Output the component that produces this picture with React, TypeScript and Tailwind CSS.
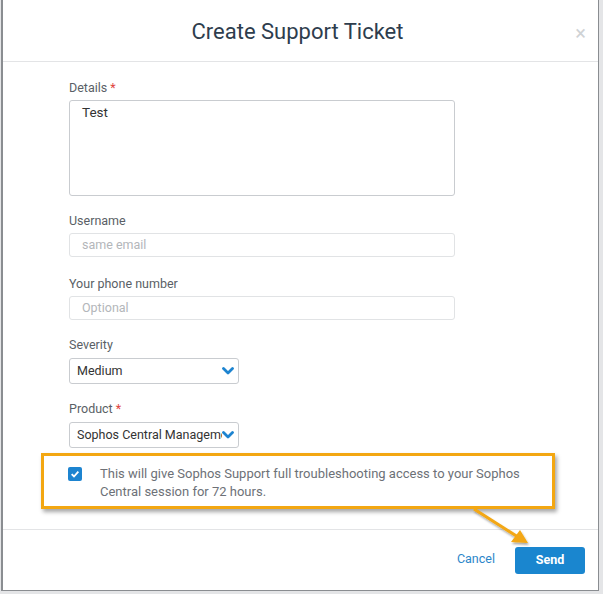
function Label({ text, required }: { text: string; required?: boolean }) {
  return (
    <div className="text-[12.5px] text-[#5a5f66] leading-[16px] mb-[4px]">
      {text}
      {required && <span className="text-[#e0443e] ml-[3px]">*</span>}
    </div>
  );
}

function Select({ value }: { value: string }) {
  return (
    <div className="mt-[5px] w-[170px] h-[26px] border border-[#c9ccd0] rounded-[3px] flex items-center pl-[7px] pr-[4px] bg-white">
      <span className="flex-1 text-[12.5px] text-[#333] whitespace-nowrap overflow-hidden">{value}</span>
      <svg viewBox="0 0 12 8" className="w-[12px] h-[8px] shrink-0">
        <path d="M1.5 1.5 L6 6 L10.5 1.5" stroke="#1d84d0" strokeWidth="2.8" fill="none" strokeLinecap="round" strokeLinejoin="round" />
      </svg>
    </div>
  );
}

export default function App() {
  return (
    <div
      className="relative w-[603px] h-[594px] bg-[#e4e5e7] overflow-hidden"
      style={{ fontFamily: "Roboto, 'Noto Sans', sans-serif" }}
    >
      <div className="w-[598px] h-[591px] ml-[1px] bg-white border-l-[2px] border-r border-b border-[#8a8d91] flex flex-col">
        {/* header */}
        <div className="relative h-[62px] border-b border-[#e3e4e6] flex items-center justify-center shrink-0">
          <h1 className="text-[22px] text-[#2e3d4d] mr-[6px] pt-[2px]">Create Support Ticket</h1>
          <span className="absolute right-[12px] top-[23px] text-[20px] leading-none text-[#cfd2d5]">×</span>
        </div>

        {/* body */}
        <div className="flex-1 pl-[66px] pt-[18px] relative">
          <Label text="Details" required />
          <div className="w-[386px] h-[96px] border border-[#c9ccd0] rounded-[3px] px-[12px] pt-[1px] text-[13.5px] text-[#333]">
            Test
          </div>

          <div className="mt-[17px]">
            <Label text="Username" />
            <div className="w-[386px] h-[24px] border border-[#e1e3e5] rounded-[3px] px-[12px] flex items-center text-[12.5px] text-[#b3b6ba]">
              same email
            </div>
          </div>

          <div className="mt-[19px]">
            <Label text="Your phone number" />
            <div className="w-[386px] h-[24px] border border-[#e1e3e5] rounded-[3px] px-[12px] flex items-center text-[12.5px] text-[#b3b6ba]">
              Optional
            </div>
          </div>

          <div className="mt-[17px]">
            <Label text="Severity" />
            <Select value="Medium" />
          </div>

          <div className="mt-[17px]">
            <Label text="Product" required />
            <Select value="Sophos Central Management" />
          </div>

          {/* highlighted consent box */}
          <div className="ml-[-28px] mt-[5px] w-[514px] h-[56px] border-[3px] border-[#f3a712] shadow-[2px_3px_4px_rgba(0,0,0,0.35)] flex items-start pt-[9px] pl-[24px]">
            <div className="w-[14px] h-[14px] mt-[2px] rounded-[2px] bg-[#1d84d0] flex items-center justify-center shrink-0">
              <svg viewBox="0 0 12 12" className="w-[10px] h-[10px]">
                <path d="M2 6.2 L4.8 9 L10 3.2" stroke="white" strokeWidth="2.2" fill="none" />
              </svg>
            </div>
            <p className="ml-[18px] text-[13px] leading-[18px] text-[#6d7177] w-[430px]">
              This will give Sophos Support full troubleshooting access to your Sophos Central session for 72 hours.
            </p>
          </div>
        </div>

        {/* footer */}
        <div className="h-[60px] border-t border-[#e3e4e6] flex items-center justify-end pr-[13px] shrink-0 mb-[1px]">
          <span className="text-[12.5px] text-[#2b86c9] mr-[20px]">Cancel</span>
          <button className="w-[70px] h-[27px] mt-[1px] rounded-[3px] bg-[#1a86cf] text-white text-[12.5px] font-bold">
            Send
          </button>
        </div>
      </div>

      {/* annotation arrow */}
      <svg className="absolute left-0 top-0 pointer-events-none" width="603" height="594">
        <defs>
          <filter id="sh" x="-20%" y="-20%" width="140%" height="140%">
            <feDropShadow dx="1" dy="2" stdDeviation="1.2" floodColor="#000" floodOpacity="0.35" />
          </filter>
        </defs>
        <g filter="url(#sh)">
          <line x1="474" y1="509" x2="518" y2="537" stroke="#f3a712" strokeWidth="3" />
          <polygon points="528,543 511,542 520,530" fill="#f3a712" />
        </g>
      </svg>
    </div>
  );
}
